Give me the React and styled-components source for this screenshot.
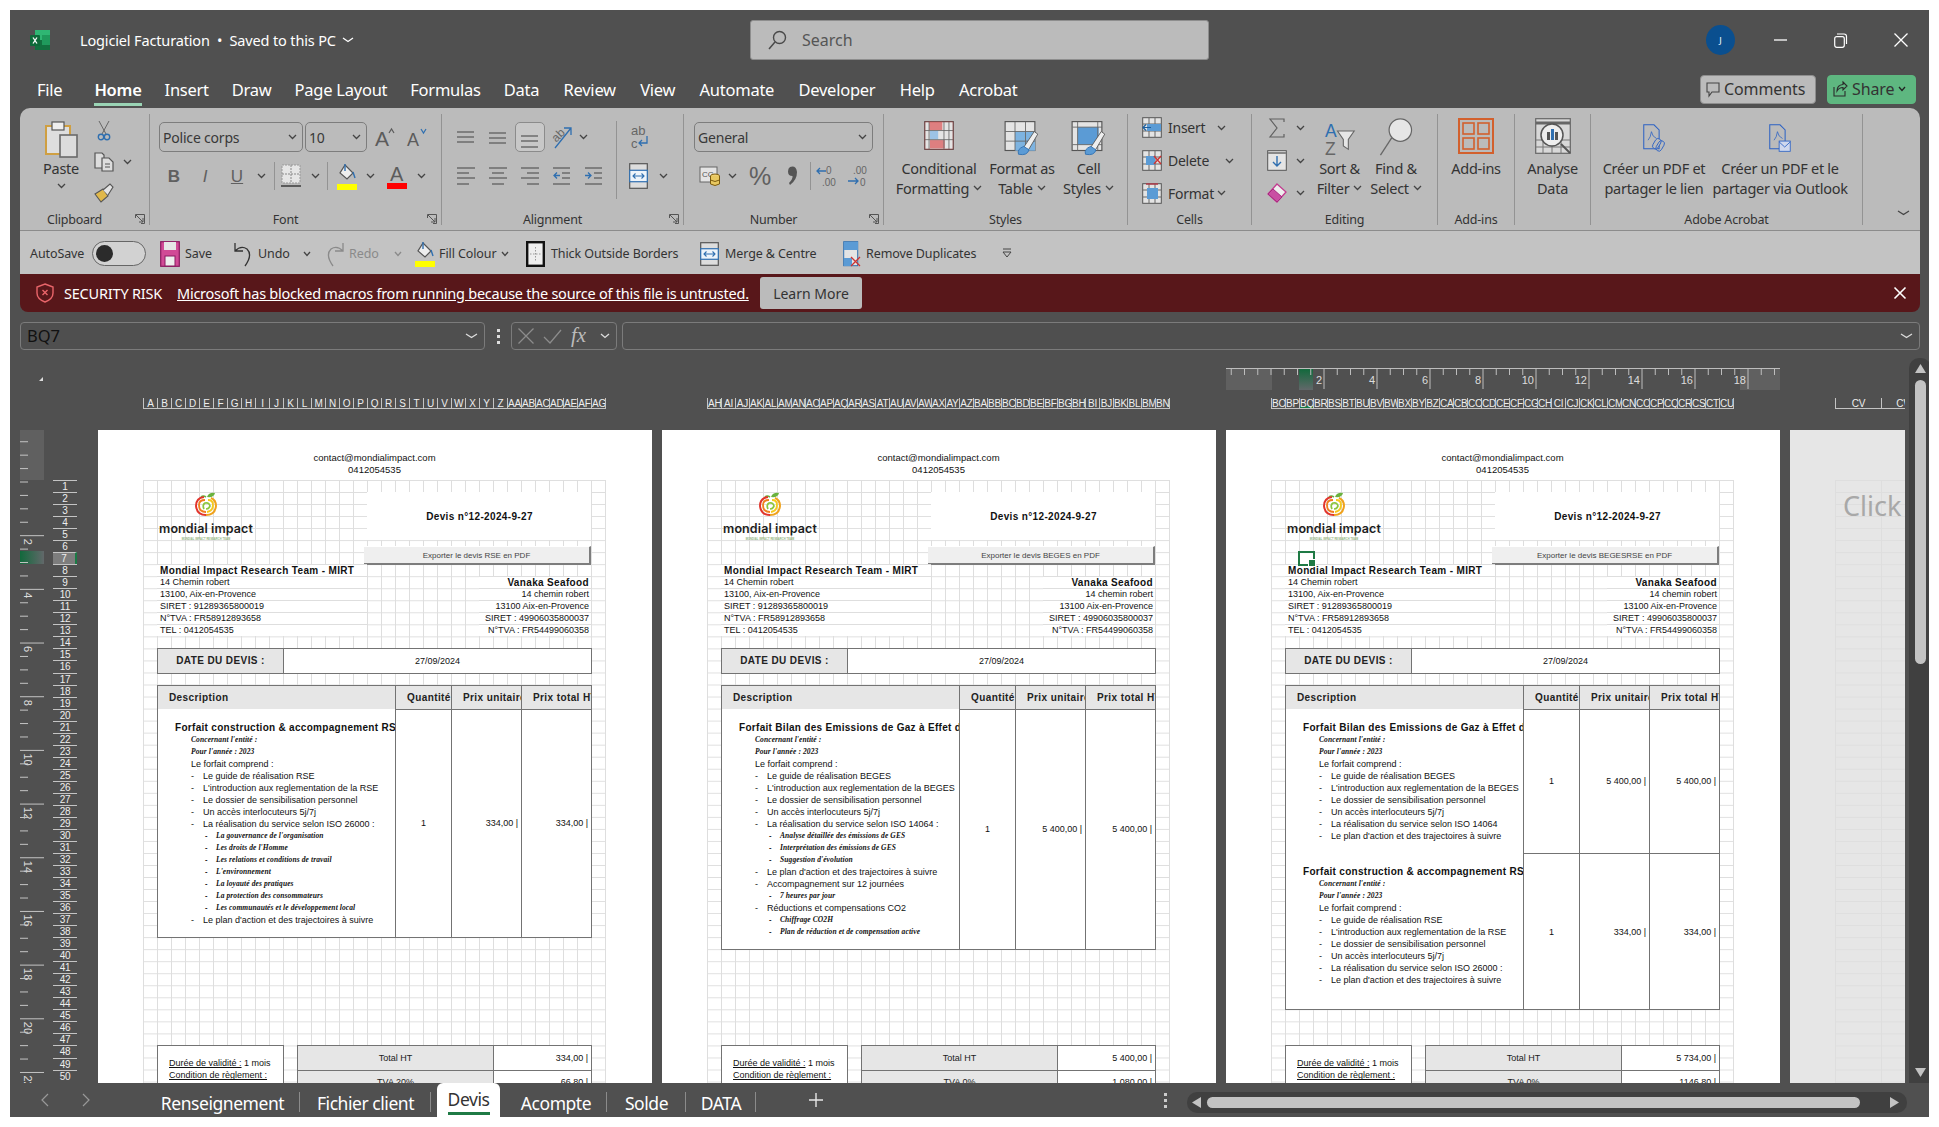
import React from 'react';
import styled, { createGlobalStyle } from 'styled-components';

const UI = '"Noto Sans", "Open Sans", sans-serif';
const SHEET = '"Liberation Sans", Arial, sans-serif';

const Global = createGlobalStyle`
  html, body { margin: 0; background: #fff; }
  * { box-sizing: border-box; }
`;

const Window = styled.div`
  margin: 10px;
  width: 1919px;
  height: 1107px;
  background: #505050;
  display: flex;
  flex-direction: column;
  overflow: hidden;
  font-family: ${UI};
  color: #fff;
`;

/* title bar */
const TitleBar = styled.div`
  height: 60px;
  display: flex;
  align-items: center;
  padding-left: 20px;
  flex-shrink: 0;
`;
const DocTitle = styled.div`
  margin-left: 30px;
  width: 670px;
  font-size: 14.5px;
  letter-spacing: -0.15px;
  display: flex;
  align-items: center;
  gap: 6px;
`;
const SearchBox = styled.div`
  width: 459px;
  height: 40px;
  background: #bbb;
  border: 1px solid #8e8e8e;
  border-radius: 3px;
  display: flex;
  align-items: center;
  gap: 15px;
  padding-left: 17px;
  color: #555;
  font-size: 16px;
`;
const Avatar = styled.div`
  margin-left: 497px;
  width: 29px;
  height: 30px;
  border-radius: 50%;
  background: #0a4f8f;
  font-size: 9px;
  display: flex;
  align-items: center;
  justify-content: center;
`;
const WinBtns = styled.div`
  display: flex;
  align-items: center;
  margin-left: 39px;
  gap: 47px;
`;

/* tab row */
const TabRow = styled.div`
  height: 38px;
  display: flex;
  align-items: center;
  padding-left: 27px;
  flex-shrink: 0;
`;
const Tab = styled.div`
  font-size: 16.5px;
  letter-spacing: -0.25px;
  margin-right: ${(p) => p.$mr || 23}px;
  line-height: 40px;
  font-weight: ${(p) => (p.$active ? 600 : 400)};
  border-bottom: ${(p) => (p.$active ? '3px solid #9ad4b5' : 'none')};
  margin-top: ${(p) => (p.$active ? '-3px' : '0')};
  height: ${(p) => (p.$active ? '36px' : '38px')};
`;
const TabRight = styled.div`
  margin-left: auto;
  display: flex;
  gap: 11px;
  padding-right: 13px;
  align-items: center;
`;
const CommentsBtn = styled.div`
  width: 116px;
  height: 29px;
  background: #bbb;
  border: 1px solid #8e8e8e;
  border-radius: 4px;
  color: #333;
  font-size: 16px;
  letter-spacing: -0.1px;
  display: flex;
  align-items: center;
  gap: 4px;
  padding-left: 5px;
`;
const ShareBtn = styled(CommentsBtn)`
  width: 89px;
  background: #5eb780;
  border-color: #5eb780;
`;

/* ribbon */
const RibbonCard = styled.div`
  margin: 0 9px 0 10px;
  height: 166px;
  border-radius: 10px 10px 0 0;
  background: #bbb;
  color: #2c2c2c;
  flex-shrink: 0;
`;
const RibbonBody = styled.div`
  height: 123px;
  padding-top: 6px;
  display: flex;
  border-bottom: 1px solid #8c8c8c;
`;
const Group = styled.div`
  position: relative;
  width: ${(p) => p.$w}px;
  height: 111px;
  border-right: ${(p) => (p.$noSep ? 'none' : '1px solid #939393')};
  display: flex;
  flex-direction: column;
  flex-shrink: 0;
`;
const GroupBody = styled.div`
  height: 95px;
  display: flex;
  flex-shrink: 0;
  padding-left: ${(p) => p.$pl || 0}px;
`;
const GroupLabel = styled.div`
  height: 22px;
  flex-shrink: 0;
  line-height: 22px;
  font-size: 12.5px;
  letter-spacing: -0.2px;
  color: #333;
  text-align: center;
  padding-right: ${(p) => (p.$launcher ? 20 : 0)}px;
`;
const Launcher = styled.div`
  position: absolute;
  right: 4px;
  bottom: 1px;
  line-height: 0;
`;
const Stack = styled.div`
  width: ${(p) => (p.$w ? `${p.$w}px` : 'auto')};
  display: flex;
  flex-direction: column;
  padding-top: ${(p) => (p.$pt === undefined ? 8 : p.$pt)}px;
  gap: ${(p) => p.$gap || 0}px;
  flex-shrink: 0;
`;
const Row = styled.div`
  height: ${(p) => p.$h || 30}px;
  display: flex;
  align-items: center;
  margin-top: ${(p) => p.$mt || 0}px;
`;
const Slot = styled.div`
  width: ${(p) => p.$w}px;
  margin-left: ${(p) => p.$ml || 0}px;
  display: flex;
  justify-content: center;
  align-items: center;
  flex-shrink: 0;
  line-height: 0;
`;
const SelectedSlot = styled(Slot)`
  height: 30px;
  border: 1px solid #8b8b8b;
  border-radius: 5px;
  background: #c8c8c8;
  align-items: flex-end;
  padding-bottom: 3px;
`;
const VSep = styled.div`
  width: 1px;
  align-self: ${(p) => (p.$tall ? 'flex-start' : 'center')};
  height: ${(p) => p.$h || 30}px;
  margin-top: ${(p) => p.$mt || 0}px;
  margin-left: ${(p) => p.$ml || 0}px;
  background: #939393;
  flex-shrink: 0;
`;
const Combo = styled.div`
  width: ${(p) => p.$w}px;
  height: 30px;
  margin-right: 2px;
  border: 1px solid #7d7d7d;
  border-radius: 5px;
  padding: 0 5px 0 3px;
  font-size: 14px;
  letter-spacing: -0.2px;
  color: #383838;
  display: flex;
  align-items: center;
  justify-content: space-between;
  flex-shrink: 0;
`;
const Glyph = styled.span`
  font-family: ${SHEET};
  font-size: ${(p) => p.$size || 16}px;
  line-height: 1;
  font-weight: ${(p) => (p.$bold ? 700 : 400)};
  font-style: ${(p) => (p.$italic ? 'italic' : 'normal')};
  text-decoration: ${(p) => (p.$under ? 'underline' : 'none')};
  color: #606060;
`;
const BigBtn = styled.div`
  width: ${(p) => p.$w}px;
  margin-left: ${(p) => p.$ml || 0}px;
  display: flex;
  flex-direction: column;
  align-items: center;
  flex-shrink: 0;
`;
const BigIcon = styled.div`
  height: 44px;
  line-height: 0;
  display: flex;
  align-items: flex-end;
  padding-bottom: ${(p) => (p.$pb === undefined ? 2 : p.$pb)}px;
`;
const BigText = styled.div`
  font-size: 14.5px;
  letter-spacing: -0.28px;
  line-height: 20px;
  white-space: nowrap;
  text-align: center;
  color: #333;
  display: flex;
  align-items: center;
  gap: 4px;
  justify-content: center;
`;
const SmallLabel = styled.span`
  font-size: 14px;
  letter-spacing: -0.25px;
  color: #333;
  width: ${(p) => p.$w}px;
  margin-left: 6px;
`;
const CollapseSlot = styled.div`
  flex: 1;
  display: flex;
  justify-content: flex-end;
  align-items: flex-end;
  padding: 0 10px 14px 0;
  line-height: 0;
`;

/* quick access */
const Qat = styled.div`
  height: 43px;
  background: #c3c3c3;
  display: flex;
  align-items: center;
  font-size: 12.5px;
  letter-spacing: -0.1px;
  color: #333;
  padding: 2px 0 0 10px;
`;
const QatText = styled.span`
  margin-left: ${(p) => p.$ml ?? 5}px;
  width: ${(p) => p.$w}px;
  flex-shrink: 0;
  white-space: nowrap;
  color: ${(p) => (p.$off ? '#8a8a8a' : '#333')};
`;
const Toggle = styled.div`
  margin-left: 8px;
  width: 54px;
  height: 25px;
  border: 1px solid #666;
  border-radius: 13px;
  background: #d2d2d2;
  padding: 3px 0 0 3px;
  flex-shrink: 0;
`;
const ToggleKnob = styled.div`
  width: 17px;
  height: 17px;
  border-radius: 50%;
  background: #2b2b2b;
`;

/* security banner */
const SecurityBar = styled.div`
  margin: 0 9px 0 10px;
  height: 38px;
  background: #58171a;
  border-radius: 0 0 8px 8px;
  display: flex;
  align-items: center;
  padding-left: 16px;
  font-size: 14.5px;
  flex-shrink: 0;
`;
const RiskTitle = styled.span`
  margin-left: 10px;
  width: 113px;
  letter-spacing: -0.2px;
  white-space: nowrap;
  flex-shrink: 0;
`;
const RiskLink = styled.span`
  width: 583px;
  text-decoration: underline;
  white-space: nowrap;
  letter-spacing: -0.25px;
  flex-shrink: 0;
`;
const LearnMore = styled.div`
  width: 102px;
  height: 32px;
  background: #bbb;
  border-radius: 3px;
  color: #333;
  font-size: 14px;
  display: flex;
  align-items: center;
  justify-content: center;
  flex-shrink: 0;
`;
const BannerClose = styled.div`
  margin-left: auto;
  padding-right: 14px;
  line-height: 0;
`;

/* formula bar */
const FormulaBar = styled.div`
  margin-top: 10px;
  padding: 0 9px 0 10px;
  height: 28px;
  display: flex;
  align-items: stretch;
  flex-shrink: 0;
`;
const FieldBox = styled.div`
  width: ${(p) => (p.$w ? `${p.$w}px` : 'auto')};
  flex: ${(p) => (p.$w ? '0 0 auto' : 1)};
  margin-left: ${(p) => p.$ml || 0}px;
  border: 1px solid #7b7b7b;
  border-radius: 4px;
  background: #4f4f4f;
  display: flex;
  align-items: center;
  justify-content: space-between;
  padding: 0 6px;
  color: #111;
  font-size: 16.5px;
  line-height: 0;
`;
const DotSlot = styled.div`
  width: 26px;
  display: flex;
  align-items: center;
  justify-content: center;
  line-height: 0;
`;

/* workspace */
const Workspace = styled.div`
  margin-top: 5px;
  height: 728px;
  display: flex;
  flex-shrink: 0;
  overflow: hidden;
`;
const LeftRail = styled.div`
  width: 88px;
  padding-left: 10px;
  flex-shrink: 0;
  position: relative;
`;
const CornerMark = styled.div`
  height: 75px;
  padding: 20px 0 0 19px;
  line-height: 0;
`;
const RailBody = styled.div`
  display: flex;
  gap: 9px;
  align-items: flex-start;
  line-height: 0;
`;
const RowHeads = styled.div`
  margin-top: 50px;
  width: 24px;
  display: grid;
  grid-auto-rows: 12.04px;
`;
const RowHead = styled.div`
  border-top: 1px solid #c4c4c4;
  font-family: ${SHEET};
  font-size: 10px;
  letter-spacing: -0.3px;
  line-height: 11px;
  text-align: center;
  color: #eee;
  background: ${(p) => (p.$on ? '#7d7d7d' : 'transparent')};
  border-right: ${(p) => (p.$on ? '2px solid #1a7a45' : 'none')};
`;
const PagesRow = styled.div`
  display: flex;
  gap: 10px;
  width: 1809px;
  flex-shrink: 0;
`;
const PageCol = styled.div`
  width: ${(p) => p.$w || 554}px;
  flex-shrink: 0;
`;
const PageHead = styled.div`
  height: 75px;
  padding-top: 13px;
  line-height: 0;
`;
const HeadLetters = styled.div`
  margin: ${(p) => (p.$withRuler ? 8 : 30)}px 0 0 ${(p) => p.$ml || 45}px;
  height: 11px;
  display: grid;
  grid-template-columns: repeat(${(p) => p.$n}, ${(p) => p.$cw}px);
  border-bottom: 1px solid #c4c4c4;
  border-right: ${(p) => (p.$open ? 'none' : '1px solid #c4c4c4')};
  width: ${(p) => (p.$open ? '70px' : 'fit-content')};
  overflow: hidden;
`;
const HeadLetter = styled.div`
  border-left: 1px solid #c4c4c4;
  font-family: ${SHEET};
  font-size: 10px;
  letter-spacing: -0.2px;
  line-height: 11px;
  text-align: center;
  color: #eee;
  overflow: hidden;
  white-space: nowrap;
  box-shadow: ${(p) => (p.$on ? 'inset 0 -2px 0 #1a7a45' : 'none')};
`;
const PageSheet = styled.div`
  height: 653px;
  background: #fff;
  color: #111;
  font-family: ${SHEET};
  padding: 22px 0 0 45px;
  overflow: hidden;
`;
const Contact = styled.div`
  width: 463px;
  height: 28px;
  text-align: center;
  font-size: 9.5px;
  line-height: 11.5px;
`;
const Sheet = styled.div`
  width: 463px;
  display: grid;
  grid-template-columns: repeat(33, 14px);
  grid-template-rows: repeat(52, 12.04px);
  background-color: #fff;
  background-image: linear-gradient(#dedede 1px, transparent 1px),
    linear-gradient(90deg, #dedede 1px, transparent 1px);
  background-size: 14px 12.04px;
  border-right: 1px solid #dedede;
`;
const Cell = styled.div`
  grid-column: ${(p) => p.$c + 1} / span ${(p) => p.$cs};
  grid-row: ${(p) => p.$r} / span ${(p) => p.$rs || 1};
  overflow: hidden;
  min-width: 0;
  min-height: 0;
`;
const MergedText = styled(Cell)`
  background: #fff;
  border-top: 1px solid #dedede;
  font-size: ${(p) => (p.$bold ? 10 : 9)}px;
  font-weight: ${(p) => (p.$bold ? 700 : 400)};
  letter-spacing: ${(p) => (p.$bold ? '0.35px' : 0)};
  line-height: 11px;
  white-space: nowrap;
  text-align: ${(p) => (p.$right ? 'right' : 'left')};
  padding: ${(p) => (p.$right ? '0 2px 0 0' : '0 0 0 3px')};
`;
const Bordered = styled(Cell)`
  margin: 0 -1px -1px 0;
  border: 1px solid #737373;
  background: ${(p) => (p.$shade ? '#e6e6e6' : '#fff')};
  display: flex;
  align-items: center;
  justify-content: ${(p) => p.$justify || 'flex-start'};
  padding: ${(p) => p.$pad || '0'};
  font-size: ${(p) => (p.$bold ? 10 : 9)}px;
  font-weight: ${(p) => (p.$bold ? 700 : 400)};
  letter-spacing: ${(p) => (p.$bold ? '0.4px' : 0)};
  white-space: nowrap;
  color: ${(p) => (p.$shade ? '#222' : '#111')};
`;
const DescCell = styled(Cell)`
  margin: 0 -1px -1px 0;
  border: 1px solid #737373;
  border-top: none;
  background: #fff;
  padding: 13px 0 0 17px;
  line-height: 12.04px;
  white-space: nowrap;
  font-size: 9px;
`;
const DescTitle = styled.div`
  height: 12.04px;
  font-size: 10px;
  font-weight: 700;
  letter-spacing: 0.3px;
`;
const DescLine = styled.div`
  height: 12.04px;
  display: flex;
  padding-left: 16px;
`;
const DescNote = styled(DescLine)`
  padding-left: ${(p) => (p.$sub ? 30 : 16)}px;
  font-family: "Liberation Serif", serif;
  font-size: 7.5px;
  font-weight: 700;
  font-style: italic;
  letter-spacing: 0.1px;
`;
const Dash = styled.span`
  width: ${(p) => (p.$sub ? 11 : 12)}px;
  flex-shrink: 0;
  font-style: normal;
  font-family: ${SHEET};
`;
const ExportBtn = styled(Cell)`
  margin: 6px 0 -1px -3px;
  background: #efefef;
  border-right: 2px solid #7d7d7d;
  border-bottom: 2px solid #7d7d7d;
  border-top: 1px solid #fff;
  font-size: 8px;
  color: #444;
  display: flex;
  align-items: center;
  justify-content: center;
`;
const TitleBox = styled(Cell)`
  background: #fff;
  font-size: 10px;
  font-weight: 700;
  letter-spacing: 0.35px;
  display: flex;
  align-items: center;
  justify-content: center;
  padding-left: 1px;
`;
const LogoBox = styled(Cell)`
  display: flex;
  flex-direction: column;
  align-items: center;
  overflow: visible;
  line-height: 0;
`;
const LogoName = styled.div`
  font-family: "Inter", sans-serif;
  font-size: 12.5px;
  font-weight: 600;
  line-height: 14px;
  margin-top: 5px;
  white-space: nowrap;
  letter-spacing: 0.1px;
  color: #1c1c1c;
`;
const LogoTag = styled.div`
  font-family: ${SHEET};
  font-size: 2.6px;
  line-height: 4px;
  margin-top: 2px;
  font-weight: 700;
  letter-spacing: 0.1px;
  color: #8fb37a;
  white-space: nowrap;
`;
const TermsBox = styled(Bordered)`
  border-bottom: none;
  display: block;
  padding: 11px 0 0 11px;
  line-height: 12px;
`;
const Under = styled.span`
  text-decoration: underline;
`;
const SelectedCell = styled(Cell)`
  margin: -1px -2px -2px -1px;
  border: 2px solid #1f7a45;
  overflow: visible;
  position: relative;
  &::after {
    content: '';
    position: absolute;
    right: -3px;
    bottom: -3px;
    width: 6px;
    height: 6px;
    background: #1f7a45;
    border: 1px solid #fff;
  }
`;
const NextPage = styled.div`
  height: 653px;
  background: #e6e6e6;
  padding: 50px 0 0 45px;
`;
const FaintGrid = styled.div`
  height: 100%;
  background-image: linear-gradient(#dedede 1px, transparent 1px),
    linear-gradient(90deg, #dedede 1px, transparent 1px);
  background-size: 46px 12.04px;
  padding: 10px 0 0 8px;
  font-size: 27px;
  line-height: 32px;
  color: #a8a8a8;
  white-space: nowrap;
  overflow: hidden;
`;
const VScroll = styled.div`
  margin: 3px 0 0 2px;
  width: 22px;
  border-radius: 10px 10px 0 0;
  background: #404040;
  display: flex;
  flex-direction: column;
  align-items: center;
  padding-top: 6px;
  line-height: 0;
  flex-shrink: 0;
`;
const VThumb = styled.div`
  margin-top: 7px;
  width: 11px;
  height: 284px;
  border-radius: 6px;
  background: #c3c3c3;
`;
const VDown = styled.div`
  margin-top: 404px;
`;

/* bottom bar */
const BottomBar = styled.div`
  flex: 1;
  background: #505050;
  display: flex;
  align-items: stretch;
  padding-left: 25px;
`;
const NavArrow = styled.div`
  width: 20px;
  margin-right: ${(p) => p.$mr || 0}px;
  display: flex;
  align-items: center;
  justify-content: center;
  line-height: 0;
`;
const SheetTab = styled.div`
  width: ${(p) => p.$w}px;
  font-size: 17.5px;
  letter-spacing: -0.45px;
  display: flex;
  align-items: center;
  justify-content: center;
  position: relative;
  padding-top: 6px;
  white-space: nowrap;
  &::after {
    content: '';
    position: absolute;
    right: 0;
    top: 9px;
    height: 20px;
    width: 1px;
    background: #8b8b8b;
  }
`;
const ActiveTab = styled.div`
  width: 63px;
  margin: 0 5px 0 6px;
  background: #fff;
  border-radius: 6px 6px 0 0;
  color: #333;
  font-size: 17.5px;
  letter-spacing: -0.45px;
  display: flex;
  flex-direction: column;
  align-items: center;
  padding-top: 4px;
`;
const ActiveLine = styled.div`
  width: 42px;
  height: 2.5px;
  margin-top: 1px;
  background: #1f7a45;
`;
const PlusSlot = styled.div`
  margin-left: 50px;
  width: 20px;
  display: flex;
  align-items: center;
  justify-content: center;
  line-height: 0;
`;
const HDots = styled.div`
  margin-left: 329px;
  width: 20px;
  display: flex;
  align-items: center;
  justify-content: center;
  line-height: 0;
`;
const HScroll = styled.div`
  margin: 9px 0 4px 12px;
  width: 720px;
  height: 21px;
  border-radius: 10px;
  background: #404040;
  display: flex;
  align-items: center;
  padding-left: 5px;
  line-height: 0;
`;
const HThumb = styled.div`
  margin-left: 6px;
  width: 653px;
  height: 11px;
  border-radius: 6px;
  background: #c3c3c3;
`;
const HRight = styled.div`
  margin-left: 30px;
`;

/* drawings */
const Svg = ({ w, h, vw, vh, children }) => (
  <svg width={w} height={h} viewBox={`0 0 ${vw || w} ${vh || h}`} fill="none" overflow="visible">{children}</svg>
);
const Chev = ({ c = '#444', w = 9 }) => (
  <Svg w={w} h={6}><path d={`M1 1 L${w / 2} 4.5 L${w - 1} 1`} stroke={c} strokeWidth="1.3" /></Svg>
);
const Lines = ({ ys, x1 = 0, x2 = 17, c = '#666' }) => (
  <>{ys.map((y, i) => <path key={i} d={`M${Array.isArray(x1) ? x1[i] : x1} ${y}H${Array.isArray(x2) ? x2[i] : x2}`} stroke={c} strokeWidth="1.4" />)}</>
);
const ExcelLogo = () => (
  <Svg w={20} h={20}>
    <rect x="5" y="0" width="15" height="10" fill="#2fb673" />
    <rect x="5" y="10" width="15" height="10" fill="#12703f" />
    <rect x="12" y="5" width="8" height="10" fill="#1f9a5c" />
    <rect x="0" y="5" width="10" height="11" rx="1" fill="#0e6a39" />
    <path d="M3 7.5 L7 13.5 M7 7.5 L3 13.5" stroke="#fff" strokeWidth="1.3" />
  </Svg>
);
const SearchIco = () => (
  <Svg w={19} h={20}><circle cx="11.5" cy="7.5" r="6" stroke="#4a4a4a" strokeWidth="1.4" /><path d="M7 12 L1 19" stroke="#4a4a4a" strokeWidth="1.5" /></Svg>
);
const PasteIco = () => (
  <Svg w={35} h={38}>
    <rect x="2" y="6" width="24" height="28" fill="#dedede" stroke="#cf9f42" strokeWidth="2" />
    <rect x="8" y="2" width="12" height="8" fill="#eee" stroke="#555" strokeWidth="1.2" />
    <rect x="16" y="15" width="17" height="22" fill="#dcdcdc" stroke="#6a6a6a" strokeWidth="1.6" />
  </Svg>
);
const CutIco = () => (
  <Svg w={14} h={21}>
    <path d="M2 1 L9 14 M12 1 L5 14" stroke="#666" strokeWidth="1" />
    <circle cx="4" cy="17" r="2.7" stroke="#2f6fb0" strokeWidth="1.4" />
    <circle cx="10" cy="17" r="2.7" stroke="#2f6fb0" strokeWidth="1.4" />
  </Svg>
);
const CopyIco = () => (
  <Svg w={20} h={20}>
    <path d="M1 1 H8 L10 3 V16 H1 Z" fill="#ddd" stroke="#555" strokeWidth="1.2" />
    <path d="M8 6 H15 L19 10 V19 H8 Z" fill="#ddd" stroke="#555" strokeWidth="1.2" />
    <path d="M11 12 H16 M11 15 H16" stroke="#555" />
  </Svg>
);
const PainterIco = () => (
  <Svg w={20} h={20}>
    <path d="M1 11 L9 6 L14 13 L7 19 Z" fill="#e0b84a" stroke="#555" strokeWidth="1.1" />
    <path d="M9 7 L16 1 L19 4 L14 12" fill="#e4e4e4" stroke="#555" strokeWidth="1.1" />
  </Svg>
);
const FontGrow = ({ up }) => (
  <Svg w={20} h={22}>
    <text x="0" y="20" fontFamily={SHEET} fontSize={up ? 21 : 18} fill="#5c5c5c">A</text>
    <path d={up ? 'M14 7 L16.5 3 L19 7' : 'M14 3 L16.5 7 L19 3'} stroke={up ? '#5c5c5c' : '#2f6fb0'} strokeWidth="1.2" />
  </Svg>
);
const BordersIco = () => (
  <Svg w={20} h={24}>
    <rect x="1" y="1" width="18" height="18" fill="#e6e6e6" stroke="#999" strokeDasharray="2 1" />
    <path d="M10 1 V19 M1 10 H19" stroke="#888" strokeDasharray="2 1" />
    <path d="M0 22 H20" stroke="#444" strokeWidth="1.6" />
  </Svg>
);
const FillIco = ({ h = 24 }) => (
  <Svg w={20} h={h}>
    <path d="M8 2 L16 10 L10 16 L3 10 Z" fill="#eee" stroke="#555" strokeWidth="1.2" />
    <path d="M8 1 V8 M16 9 L18 15" stroke="#2f6fb0" strokeWidth="1.4" />
    <rect x="0" y={h - 6} width="20" height="6" fill="#ffff00" />
  </Svg>
);
const ColorA = () => (
  <Svg w={20} h={25}>
    <text x="3" y="17" fontFamily={SHEET} fontSize="20" fill="#5c5c5c">A</text>
    <rect x="0" y="19" width="20" height="6" fill="#ff0000" />
  </Svg>
);
const OrientIco = () => (
  <Svg w={22} h={24}>
    <text x="0" y="15" fontFamily={SHEET} fontSize="12" fill="#666" transform="rotate(-45 6 10)">ab</text>
    <path d="M4 23 L20 3 M13 3 H20 V10" stroke="#2f6fb0" strokeWidth="1.3" />
  </Svg>
);
const WrapIco = () => (
  <Svg w={18} h={27}>
    <text x="0" y="11" fontFamily={SHEET} fontSize="13" fill="#666">ab</text>
    <text x="0" y="24" fontFamily={SHEET} fontSize="13" fill="#666">c</text>
    <path d="M16 12 V19 H8 M11 16 L8 19 L11 22" stroke="#2f6fb0" strokeWidth="1.3" />
  </Svg>
);
const IndentIco = ({ dir }) => (
  <Svg w={18} h={18}>
    <Lines ys={[1, 17]} />
    <Lines ys={[6, 11]} x1={9} />
    <path d={dir < 0 ? 'M7 8.5 H1 M4 5.5 L1 8.5 L4 11.5' : 'M0 8.5 H6 M3 5.5 L6 8.5 L3 11.5'} stroke="#2f6fb0" strokeWidth="1.3" />
  </Svg>
);
const MergeIco = ({ s = 19, h = 26 }) => (
  <Svg w={s} h={h}>
    <rect x="0.7" y="0.7" width={s - 1.4} height={h - 1.4} fill="#ddd" stroke="#555" strokeWidth="1.2" />
    <rect x="0.7" y={h * 0.28} width={s - 1.4} height={h * 0.44} fill="#eef4fa" stroke="#2f6fb0" strokeWidth="1.2" />
    <path d={`M4 ${h / 2} H${s - 4} M6.5 ${h / 2 - 2.5} L4 ${h / 2} L6.5 ${h / 2 + 2.5} M${s - 6.5} ${h / 2 - 2.5} L${s - 4} ${h / 2} L${s - 6.5} ${h / 2 + 2.5}`} stroke="#2f6fb0" strokeWidth="1.1" />
  </Svg>
);
const AccountingIco = () => (
  <Svg w={22} h={22}>
    <rect x="1" y="2" width="17" height="15" fill="#e4e4e4" stroke="#666" />
    <text x="3" y="12" fontFamily={SHEET} fontSize="8" fill="#555">CC</text>
    <ellipse cx="16" cy="11" rx="4.5" ry="2" fill="#f0d070" stroke="#7a5a10" />
    <path d="M11.5 11 V19 Q16 22 20.5 19 V11" fill="#e8c860" stroke="#7a5a10" />
    <path d="M11.5 15 Q16 18 20.5 15" stroke="#7a5a10" />
  </Svg>
);
const CommaIco = () => (
  <Svg w={11} h={20}><path d="M3 1 Q9 -1 10 6 Q10 14 3 19 L2 17 Q6 13 5.5 10 Q1 10 1 5.5 Q1 2 3 1 Z" fill="#555" /></Svg>
);
const DecimalIco = ({ more }) => (
  <Svg w={20} h={24}>
    <text x={more ? 5 : 9} y="10" fontFamily={SHEET} fontSize="10" fill="#666">{more ? '.00' : '0'}</text>
    <text x={more ? 12 : 5} y="22" fontFamily={SHEET} fontSize="10" fill="#666">{more ? '0' : '.00'}</text>
    <path d={more ? 'M0 17 H10 M7 14 L10 17 L7 20' : 'M0 7 H9 M3 4 L0 7 L3 10'} stroke="#2f6fb0" strokeWidth="1.3" />
  </Svg>
);
const CondFmtIco = () => (
  <Svg w={36} h={29} vw={36} vh={35}>
    <rect x="0.7" y="0.7" width="34.6" height="33.6" fill="#e4e4e4" stroke="#555" strokeWidth="1.3" />
    <rect x="6" y="1" width="16" height="10" fill="#de7f80" />
    <rect x="7" y="23" width="18" height="10" fill="#de7f80" />
    <rect x="7" y="12" width="10" height="10" fill="#9cc3e5" />
    <path d="M1 11.5 H35 M1 22.5 H35 M6 1 V34 M24 1 V34 M30 1 V34" stroke="#666" />
    <path d="M1 1 H35 V34 H1 Z" stroke="#a33" strokeWidth="0.6" />
  </Svg>
);
const Brush = () => (
  <>
    <path d="M22 30 L34 12 L38 15 L28 32" fill="#eee" stroke="#555" />
    <path d="M16 38 Q14 32 22 29 L28 33 Q26 40 16 38 Z" fill="#5b9bd5" stroke="#2f6fb0" />
  </>
);
const TableFmtIco = () => (
  <Svg w={38} h={35} vw={40} vh={40}>
    <rect x="0.7" y="0.7" width="34" height="33" fill="#e4e4e4" stroke="#555" strokeWidth="1.3" />
    <rect x="12" y="12" width="23" height="22" fill="#7db3e0" />
    <path d="M1 12 H35 M1 23 H35 M12 1 V34 M24 1 V34" stroke="#666" />
    <Brush />
  </Svg>
);
const CellStyleIco = () => (
  <Svg w={38} h={35} vw={40} vh={40}>
    <rect x="0.7" y="0.7" width="34" height="33" fill="#e4e4e4" stroke="#555" strokeWidth="1.3" />
    <rect x="7" y="7" width="24" height="20" fill="#5b9bd5" />
    <path d="M1 7 H35 M1 27 H35 M7 1 V34 M30 1 V34" stroke="#666" />
    <Brush />
  </Svg>
);
const CellOpIco = ({ kind }) => (
  <Svg w={20} h={21}>
    <rect x="0.7" y="0.7" width="18.6" height="19.6" fill="#e4e4e4" stroke="#555" />
    <path d="M7 1 V20 M13 1 V20 M1 7 H19 M1 14 H19" stroke="#666" />
    {kind === 'insert' && <><rect x="5" y="7" width="14" height="7" fill="#5b9bd5" /><path d="M1 10.5 H9 M4 7.5 L1 10.5 L4 13.5" stroke="#1d5f9e" strokeWidth="1.2" /></>}
    {kind === 'delete' && <><rect x="4" y="6" width="9" height="9" fill="#5b9bd5" /><path d="M12 6 L19 14 M19 6 L12 14" stroke="#c33" strokeWidth="1.4" /></>}
    {kind === 'format' && <><rect x="5" y="5" width="11" height="11" fill="#5b9bd5" /><path d="M4 1 H16" stroke="#b23a48" strokeWidth="1.5" /></>}
  </Svg>
);
const SigmaIco = () => (
  <Svg w={16} h={20}><path d="M15 4 V1 H1 L8 10 L1 19 H15 V16" stroke="#606060" strokeWidth="1.2" /></Svg>
);
const FillDownIco = () => (
  <Svg w={20} h={21}>
    <rect x="0.7" y="0.7" width="18.6" height="19.6" fill="#e4e4e4" stroke="#555" />
    <path d="M1 3 H19" stroke="#888" strokeWidth="2" />
    <path d="M10 6 V16 M6 12 L10 16 L14 12" stroke="#2f6fb0" strokeWidth="1.4" />
  </Svg>
);
const EraserIco = () => (
  <Svg w={20} h={20}>
    <path d="M10 1 L19 9 L10 19 L1 11 Z" fill="#eee" stroke="#c33b8f" strokeWidth="1.3" />
    <path d="M1 11 L6 6 L15 14 L10 19 Z" fill="#c94fa3" stroke="#a82a80" />
  </Svg>
);
const SortIco = () => (
  <Svg w={36} h={35} vw={36} vh={42}>
    <text x="0" y="19" fontFamily={SHEET} fontSize="21" fill="#2f6fb0">A</text>
    <text x="0" y="41" fontFamily={SHEET} fontSize="21" fill="#666">Z</text>
    <path d="M15 12 H35 L28 22 V34 L22 30 V22 Z" fill="#e6e6e6" stroke="#666" strokeWidth="1.3" />
  </Svg>
);
const FindIco = () => (
  <Svg w={36} h={38} vw={38} vh={44}>
    <circle cx="24" cy="14" r="13" fill="#e6e6e6" stroke="#666" strokeWidth="1.4" />
    <path d="M14 23 L1 43" stroke="#666" strokeWidth="1.5" />
  </Svg>
);
const AddInsIco = () => (
  <Svg w={36} h={36}>
    <rect x="1" y="1" width="34" height="34" stroke="#d2602d" strokeWidth="2" />
    <rect x="5" y="5" width="11" height="11" stroke="#d2602d" strokeWidth="1.6" />
    <rect x="20" y="5" width="11" height="11" stroke="#d2602d" strokeWidth="1.6" />
    <rect x="5" y="20" width="11" height="11" stroke="#d2602d" strokeWidth="1.6" />
    <rect x="20" y="20" width="11" height="11" stroke="#d2602d" strokeWidth="1.6" />
  </Svg>
);
const AnalyseIco = () => (
  <Svg w={36} h={36}>
    <rect x="0.7" y="0.7" width="34.6" height="34.6" fill="#d8d8d8" stroke="#666" strokeWidth="1.2" />
    <path d="M1 5 H35" stroke="#666" strokeWidth="3" />
    <path d="M1 22 H35 M1 29 H35 M8 24 V35 M17 24 V35 M26 24 V35" stroke="#777" />
    <circle cx="17" cy="17" r="11" fill="#eee" stroke="#555" strokeWidth="1.5" />
    <path d="M26 26 L35 35" stroke="#555" strokeWidth="2" />
    <rect x="12" y="14" width="3" height="8" fill="#555" />
    <rect x="16" y="11" width="3" height="11" fill="#2f6fb0" />
    <rect x="20" y="14" width="3" height="8" fill="#555" />
  </Svg>
);
const PdfDoc = () => (
  <>
    <path d="M1 1 H13 L19 7 V29 H1 Z" stroke="#2c62c4" strokeWidth="1.2" />
    <path d="M6 19 Q9 16 10 9 Q11 15 16 17" stroke="#2c62c4" strokeWidth="0.9" />
  </>
);
const PdfLinkIco = () => (
  <Svg w={24} h={29} vw={26} vh={34}>
    <PdfDoc />
    <rect x="13" y="17" width="7" height="13" rx="3.5" transform="rotate(30 17 23)" fill="#bbb" stroke="#2c62c4" />
    <rect x="17" y="19" width="7" height="13" rx="3.5" transform="rotate(30 20 25)" stroke="#2c62c4" />
  </Svg>
);
const PdfMailIco = () => (
  <Svg w={24} h={29} vw={26} vh={34}>
    <PdfDoc />
    <rect x="12" y="20" width="13" height="12" fill="#cfd8ee" stroke="#2c62c4" />
    <path d="M12 21 L18.5 27 L25 21" stroke="#2c62c4" />
  </Svg>
);
const LauncherIco = () => (
  <Svg w={10} h={10}>
    <path d="M0.5 4 V0.5 H9.5 V9.5 H6" stroke="#555" />
    <path d="M1 1 L8 8 M8 4 V8 H4" stroke="#555" />
  </Svg>
);
const SaveIco = () => (
  <Svg w={20} h={26}>
    <rect x="0.7" y="0.7" width="18.6" height="24.6" fill="#d14a96" stroke="#8a1a60" strokeWidth="1.2" />
    <rect x="4" y="1" width="12" height="8" fill="#e6e6e6" />
    <rect x="5" y="15" width="10" height="10" fill="#eee" stroke="#8a1a60" />
  </Svg>
);
const UndoIco = ({ c = '#333' }) => (
  <Svg w={20} h={26}>
    <path d="M2 2 V10 H10 M2 10 Q8 4 14 8 Q20 14 12 25" stroke={c} strokeWidth="1.3" />
  </Svg>
);
const RedoIco = () => (
  <Svg w={20} h={26}>
    <path d="M18 2 V10 H10 M18 10 Q12 4 6 8 Q0 14 8 25" stroke="#8a8a8a" strokeWidth="1.3" />
  </Svg>
);
const ThickIco = () => (
  <Svg w={19} h={26}>
    <rect x="1.2" y="1.2" width="16.6" height="23.6" fill="#eee" stroke="#111" strokeWidth="2.4" />
    <path d="M9.5 6 V20 M4 13 H15" stroke="#999" strokeDasharray="1.5 1.5" />
  </Svg>
);
const DedupIco = () => (
  <Svg w={18} h={26}>
    <rect x="0.7" y="0.7" width="14" height="24" fill="#e4e4e4" stroke="#2f6fb0" />
    <rect x="1" y="1" width="14" height="8" fill="#5b9bd5" />
    <rect x="1" y="17" width="8" height="8" fill="#5b9bd5" />
    <path d="M8 16 L17 25 M17 16 L8 25" stroke="#c33" strokeWidth="1.3" />
  </Svg>
);
const MoreIco = () => (
  <Svg w={10} h={11}><path d="M1 1 H9" stroke="#444" /><path d="M1 4 L5 9 L9 4 Z" stroke="#444" /></Svg>
);
const ShieldIco = () => (
  <Svg w={18} h={20}>
    <path d="M9 1 L17 4 V10 Q17 16 9 19 Q1 16 1 10 V4 Z" stroke="#e8656a" strokeWidth="1.4" />
    <path d="M6.5 7 L11.5 12 M11.5 7 L6.5 12" stroke="#e8656a" strokeWidth="1.4" />
  </Svg>
);
const CrossIco = ({ s = 13, c = '#fff', sw = 1.3 }) => (
  <Svg w={s} h={s}><path d={`M0.5 0.5 L${s - 0.5} ${s - 0.5} M${s - 0.5} 0.5 L0.5 ${s - 0.5}`} stroke={c} strokeWidth={sw} /></Svg>
);
const MinIco = () => <Svg w={13} h={2}><path d="M0 1 H13" stroke="#fff" strokeWidth="1.3" /></Svg>;
const RestoreIco = () => (
  <Svg w={13} h={15}>
    <rect x="0.7" y="3.7" width="9.6" height="10.6" rx="2" stroke="#fff" strokeWidth="1.2" />
    <path d="M3 1 H10 Q12.5 1 12.5 3.5 V11" stroke="#fff" strokeWidth="1.2" />
  </Svg>
);
const CommentIco = () => (
  <Svg w={14} h={15}><path d="M1 1 H13 V10 H6 L3 14 V10 H1 Z" stroke="#444" strokeWidth="1.1" /></Svg>
);
const ShareIco = () => (
  <Svg w={15} h={16}>
    <path d="M10 1 L14 5 L10 9 V6.5 Q6 6.5 4 10 Q4 4 10 3.5 Z" stroke="#2b2b2b" strokeWidth="1.1" />
    <path d="M1 6 V15 H12 V10" stroke="#2b2b2b" strokeWidth="1.1" />
  </Svg>
);
const VDots = ({ c = '#ddd' }) => (
  <Svg w={3} h={15}>
    <rect y="0" width="3" height="3" fill={c} /><rect y="6" width="3" height="3" fill={c} /><rect y="12" width="3" height="3" fill={c} />
  </Svg>
);
const Fx = () => (
  <Svg w={20} h={22}>
    <text x="0" y="17" fontFamily='"Liberation Serif", serif' fontStyle="italic" fontSize="21" fill="#bbb">fx</text>
  </Svg>
);
const AppleMark = () => (
  <Svg w={24} h={25}>
    <path d="M13 5 Q15 0 21 1 Q20 6 13 5 Z" fill="#6ab23e" />
    <path d="M7 5 Q9 3 12 5" stroke="#6ab23e" strokeWidth="1.6" />
    <path d="M12 23 Q3 23 2 14 Q2 6 10 5" stroke="#e2352c" strokeWidth="2" />
    <path d="M12 23 Q21 23 22 14 Q22 8 17 6" stroke="#f0a21c" strokeWidth="2" />
    <path d="M12 20 Q5 20 5 13 Q5 8 11 8" stroke="#f07f1e" strokeWidth="1.8" />
    <path d="M13 20 Q19 19 19 13 Q19 8 14 8" stroke="#f6c91c" strokeWidth="1.8" />
    <path d="M10 17 Q8 13 11 11 Q15 10 16 14 Q15 17 12 17" stroke="#8cc63f" strokeWidth="1.7" />
  </Svg>
);
const TopRuler = () => {
  const ticks = [];
  const zero = 45;
  for (let k = -3; k <= 40; k++) {
    const x = zero + k * 13.25;
    if (x < 0 || x > 552) continue;
    ticks.push(<path key={k} d={`M${x} 0 V${k % 4 === 0 && k > 0 && k < 38 ? 21 : 7}`} stroke="#bdbdbd" />);
    if (k % 4 === 0 && k > 0 && k < 38) {
      ticks.push(<text key={`t${k}`} x={x - 2} y="16" textAnchor="end" fontFamily={SHEET} fontSize="11" fill="#ddd">{k / 2}</text>);
    }
  }
  return (
    <Svg w={554} h={22}>
      <rect x="0" y="0" width="46" height="22" fill="#606060" />
      <rect x="514" y="0" width="40" height="22" fill="#606060" />
      <defs><linearGradient id="rg" x1="0" y1="0" x2="0" y2="1"><stop offset="0" stopColor="#12693c" /><stop offset="1" stopColor="#62686a" /></linearGradient></defs>
      <rect x="73" y="1" width="14" height="21" fill="url(#rg)" />
      <path d="M0 0.5 H554" stroke="#bdbdbd" />
      {ticks}
    </Svg>
  );
};
const LeftRuler = () => {
  const ticks = [];
  for (let k = -3; k <= 45; k++) {
    const y = 52 + k * 13.42;
    const long = k % 4 === 0 && k > 0;
    ticks.push(<path key={k} d={`M0 ${y} H${long ? 24 : 8}`} stroke="#c4c4c4" />);
    if (long) {
      ticks.push(
        <text key={`t${k}`} x="0" y="0" transform={`translate(4 ${y + 3}) rotate(90)`} fontFamily={SHEET} fontSize="11" fill="#ddd">{k / 2}</text>
      );
    }
  }
  return (
    <Svg w={24} h={653}>
      <rect x="0" y="0" width="24" height="50" fill="#606060" />
      <defs><linearGradient id="lg" x1="0" y1="0" x2="1" y2="0"><stop offset="0" stopColor="#12693c" /><stop offset="1" stopColor="#62686a" /></linearGradient></defs>
      <rect x="0" y="121" width="24" height="13" fill="url(#lg)" />
      {ticks}
    </Svg>
  );
};
const Tri = ({ dir, c = '#c3c3c3' }) => {
  const d = { up: 'M0 9 L5.5 0 L11 9 Z', down: 'M0 0 L5.5 9 L11 0 Z', left: 'M9 0 L0 5.5 L9 11 Z', right: 'M0 0 L9 5.5 L0 11 Z' }[dir];
  return <Svg w={dir === 'up' || dir === 'down' ? 11 : 9} h={dir === 'up' || dir === 'down' ? 9 : 11}><path d={d} fill={c} /></Svg>;
};

/* data */
const colName = (i) => (i < 26 ? String.fromCharCode(65 + i) : String.fromCharCode(64 + Math.floor(i / 26)) + String.fromCharCode(65 + (i % 26)));

const COMMON = ['Le dossier de sensibilisation personnel', 'Un accès interlocuteurs 5j/7j'];
const HEAD = [['note', "Concernant l'entité :"], ['note', "Pour l'année : 2023"], ['plain', 'Le forfait comprend :']];
const dash = (t) => ['dash', t];
const sub = (t) => ['sub', t];

const RSE_INTRO = [dash('Le guide de réalisation RSE'), dash("L'introduction aux reglementation de la RSE"), ...COMMON.map(dash)];
const BEGES_INTRO = [dash('Le guide de réalisation BEGES'), dash("L'introduction aux reglementation de la BEGES"), ...COMMON.map(dash)];
const PLAN = dash("Le plan d'action et des trajectoires à suivre");
const RSE_TITLE = 'Forfait construction & accompagnement RSE';
const BEGES_TITLE = 'Forfait Bilan des Emissions de Gaz à Effet de Serre';

const PAGES = [
  {
    start: 0,
    button: 'Exporter le devis RSE en PDF',
    rows: [{
      r: 20, rs: 19, title: RSE_TITLE, price: '334,00 |',
      lines: [...HEAD, ...RSE_INTRO, dash('La réalisation du service selon ISO 26000 :'),
        sub("La gouvernance de l'organisation"), sub("Les droits de l'Homme"), sub('Les relations et conditions de travail'),
        sub("L'environnement"), sub('La loyauté des pratiques'), sub('La protection des consommateurs'),
        sub('Les communautés et le développement local'), PLAN],
    }],
    total: '334,00 |', tvaLabel: 'TVA 20%', tva: '66,80 |',
  },
  {
    start: 33,
    button: 'Exporter le devis BEGES en PDF',
    rows: [{
      r: 20, rs: 20, title: BEGES_TITLE, price: '5 400,00 |',
      lines: [...HEAD, ...BEGES_INTRO, dash('La réalisation du service selon ISO 14064 :'),
        sub('Analyse détaillée des émissions de GES'), sub('Interprétation des émissions de GES'), sub("Suggestion d'évolution"),
        PLAN, dash('Accompagnement sur 12 journées'), sub('7 heures par jour'), dash('Réductions et compensations CO2'),
        sub('Chiffrage CO2H'), sub('Plan de réduction et de compensation active')],
    }],
    total: '5 400,00 |', tvaLabel: 'TVA 0%', tva: '1 080,00 |',
  },
  {
    start: 66,
    button: 'Exporter le devis BEGESRSE en PDF',
    active: true,
    rows: [
      { r: 20, rs: 12, title: BEGES_TITLE, price: '5 400,00 |',
        lines: [...HEAD, ...BEGES_INTRO, dash('La réalisation du service selon ISO 14064'), PLAN] },
      { r: 32, rs: 13, title: RSE_TITLE, price: '334,00 |',
        lines: [...HEAD, ...RSE_INTRO, dash('La réalisation du service selon ISO 26000 :'), PLAN] },
    ],
    total: '5 734,00 |', tvaLabel: 'TVA 0%', tva: '1146,80 |',
  },
];

const LEFT_ADDR = ['14 Chemin robert', '13100, Aix-en-Provence', 'SIRET : 91289365800019', 'N°TVA : FR58912893658', 'TEL : 0412054535'];
const RIGHT_ADDR = ['14 chemin robert', '13100 Aix-en-Provence', 'SIRET : 49906035800037', 'N°TVA : FR54499060358'];

const Description = ({ row }) => (
  <DescCell $c={1} $cs={17} $r={row.r} $rs={row.rs}>
    <DescTitle>{row.title}</DescTitle>
    {row.lines.map(([kind, text], i) => {
      if (kind === 'note') return <DescNote key={i}>{text}</DescNote>;
      if (kind === 'plain') return <DescLine key={i}>{text}</DescLine>;
      if (kind === 'dash') return <DescLine key={i}><Dash>-</Dash>{text}</DescLine>;
      return <DescNote key={i} $sub><Dash $sub>-</Dash>{text}</DescNote>;
    })}
  </DescCell>
);

const QuotePage = ({ page }) => (
  <PageCol>
    <PageHead>
      {page.active && <TopRuler />}
      <HeadLetters $withRuler={page.active} $n={33} $cw={14}>
        {Array.from({ length: 33 }, (_, i) => (
          <HeadLetter key={i} $on={page.active && i === 2}>{colName(page.start + i)}</HeadLetter>
        ))}
      </HeadLetters>
    </PageHead>
    <PageSheet>
      <Contact>contact@mondialimpact.com<br />0412054535</Contact>
      <Sheet>
        <LogoBox $c={1} $cs={7} $r={2} $rs={5}>
          <AppleMark />
          <LogoName>mondial impact</LogoName>
          <LogoTag>MONDIAL IMPACT RESEARCH TEAM</LogoTag>
        </LogoBox>
        <TitleBox $c={16} $cs={16} $r={2} $rs={4}>Devis n°12-2024-9-27</TitleBox>
        <ExportBtn $c={16} $cs={16} $r={6} $rs={2}>{page.button}</ExportBtn>

        <MergedText $c={1} $cs={15} $r={8} $bold>Mondial Impact Research Team - MIRT</MergedText>
        {LEFT_ADDR.map((t, i) => <MergedText key={t} $c={1} $cs={15} $r={9 + i}>{t}</MergedText>)}
        <MergedText $c={24} $cs={8} $r={9} $right $bold>Vanaka Seafood</MergedText>
        {RIGHT_ADDR.map((t, i) => <MergedText key={t} $c={24} $cs={8} $r={10 + i} $right>{t}</MergedText>)}

        <Bordered $c={1} $cs={9} $r={15} $rs={2} $shade $bold $justify="center">DATE DU DEVIS :</Bordered>
        <Bordered $c={10} $cs={22} $r={15} $rs={2} $justify="center">27/09/2024</Bordered>

        <Bordered $c={1} $cs={17} $r={18} $rs={2} $shade $bold $pad="0 0 0 11px">Description</Bordered>
        <Bordered $c={18} $cs={4} $r={18} $rs={2} $shade $bold $pad="0 0 0 11px">Quantité</Bordered>
        <Bordered $c={22} $cs={5} $r={18} $rs={2} $shade $bold $pad="0 0 0 11px">Prix unitaire</Bordered>
        <Bordered $c={27} $cs={5} $r={18} $rs={2} $shade $bold $pad="0 0 0 11px">Prix total HT</Bordered>

        {page.rows.map((row) => (
          <React.Fragment key={row.r}>
            <Description row={row} />
            <Bordered $c={18} $cs={4} $r={row.r} $rs={row.rs} $justify="center">1</Bordered>
            <Bordered $c={22} $cs={5} $r={row.r} $rs={row.rs} $justify="flex-end" $pad="0 3px 0 0">{row.price}</Bordered>
            <Bordered $c={27} $cs={5} $r={row.r} $rs={row.rs} $justify="flex-end" $pad="0 3px 0 0">{row.price}</Bordered>
          </React.Fragment>
        ))}

        <TermsBox $c={1} $cs={9} $r={48} $rs={5}>
          <Under>Durée de validité :</Under> 1 mois<br />
          <Under>Condition de règlement :</Under>
        </TermsBox>
        <Bordered $c={11} $cs={14} $r={48} $rs={2} $shade $justify="center">Total HT</Bordered>
        <Bordered $c={25} $cs={7} $r={48} $rs={2} $justify="flex-end" $pad="0 3px 0 0">{page.total}</Bordered>
        <Bordered $c={11} $cs={14} $r={50} $rs={2} $shade $justify="center">{page.tvaLabel}</Bordered>
        <Bordered $c={25} $cs={7} $r={50} $rs={2} $justify="flex-end" $pad="0 3px 0 0">{page.tva}</Bordered>

        {page.active && <SelectedCell $c={2} $cs={1} $r={7} />}
      </Sheet>
    </PageSheet>
  </PageCol>
);

const Launch = () => <Launcher><LauncherIco /></Launcher>;

const App = () => (
  <>
    <Global />
    <Window>
      <TitleBar>
        <ExcelLogo />
        <DocTitle>Logiciel Facturation&nbsp;&nbsp;•&nbsp;&nbsp;Saved to this PC <Chev c="#fff" w={12} /></DocTitle>
        <SearchBox><SearchIco />Search</SearchBox>
        <Avatar>J</Avatar>
        <WinBtns>
          <MinIco />
          <RestoreIco />
          <CrossIco s={14} />
        </WinBtns>
      </TitleBar>

      <TabRow>
        <Tab $mr={32}>File</Tab>
        <Tab $active>Home</Tab>
        {['Insert', 'Draw', 'Page Layout', 'Formulas'].map((t) => <Tab key={t}>{t}</Tab>)}
        {['Data', 'Review', 'View', 'Automate', 'Developer', 'Help', 'Acrobat'].map((t) => <Tab key={t} $mr={24.3}>{t}</Tab>)}
        <TabRight>
          <CommentsBtn><CommentIco />Comments</CommentsBtn>
          <ShareBtn><ShareIco />Share <Chev c="#222" w={8} /></ShareBtn>
        </TabRight>
      </TabRow>

      <RibbonCard>
        <RibbonBody>
          <Group $w={130}>
            <GroupBody $pl={10}>
              <BigBtn $w={62}>
                <BigIcon $pb={0}><PasteIco /></BigIcon>
                <BigText>Paste</BigText>
                <Row $h={16}><Chev /></Row>
              </BigBtn>
              <Stack $pt={0}>
                <Row $h={32}><Slot $w={24}><CutIco /></Slot></Row>
                <Row $h={32}><Slot $w={24}><CopyIco /></Slot><Slot $w={22}><Chev /></Slot></Row>
                <Row $h={30}><Slot $w={24}><PainterIco /></Slot></Row>
              </Stack>
            </GroupBody>
            <GroupLabel $launcher>Clipboard</GroupLabel>
            <Launch />
          </Group>

          <Group $w={292}>
            <GroupBody $pl={9}>
              <Stack $gap={9}>
                <Row>
                  <Combo $w={144}>Police corps<Chev /></Combo>
                  <Combo $w={62}>10<Chev /></Combo>
                  <Slot $w={32}><FontGrow up /></Slot>
                  <Slot $w={32}><FontGrow /></Slot>
                </Row>
                <Row>
                  <Slot $w={30}><Glyph $bold $size={17}>B</Glyph></Slot>
                  <Slot $w={32}><Glyph $italic $size={17}>I</Glyph></Slot>
                  <Slot $w={32}><Glyph $under $size={17}>U</Glyph></Slot>
                  <Slot $w={16}><Chev /></Slot>
                  <VSep $h={28} $ml={5} />
                  <Slot $w={32}><BordersIco /></Slot>
                  <Slot $w={16}><Chev /></Slot>
                  <VSep $h={28} $ml={4} />
                  <Slot $w={38}><FillIco h={27} /></Slot>
                  <Slot $w={8}><Chev /></Slot>
                  <Slot $w={38} $ml={4}><ColorA /></Slot>
                  <Slot $w={12} $ml={-1}><Chev /></Slot>
                </Row>
              </Stack>
            </GroupBody>
            <GroupLabel $launcher>Font</GroupLabel>
            <Launch />
          </Group>

          <Group $w={242}>
            <GroupBody $pl={8}>
              <Stack $gap={9} $w={166}>
                <Row>
                  <Slot $w={32}><Svg w={18} h={12}><Lines ys={[1, 6, 11]} /></Svg></Slot>
                  <Slot $w={32}><Svg w={18} h={14}><Lines ys={[3, 8, 13]} /></Svg></Slot>
                  <SelectedSlot $w={30} $ml={1}><Svg w={18} h={13}><Lines ys={[1, 6, 12]} /></Svg></SelectedSlot>
                  <Slot $w={32} $ml={1}><OrientIco /></Slot>
                  <Slot $w={10}><Chev /></Slot>
                </Row>
                <Row>
                  <Slot $w={32}><Svg w={18} h={18}><Lines ys={[1, 6, 11, 17]} x2={[18, 12, 18, 12]} /></Svg></Slot>
                  <Slot $w={32}><Svg w={18} h={18}><Lines ys={[1, 6, 11, 17]} x1={[0, 3, 0, 3]} x2={[18, 15, 18, 15]} /></Svg></Slot>
                  <Slot $w={32}><Svg w={18} h={18}><Lines ys={[1, 6, 11, 17]} x1={[0, 6, 0, 6]} x2={18} /></Svg></Slot>
                  <Slot $w={32}><IndentIco dir={-1} /></Slot>
                  <Slot $w={32}><IndentIco dir={1} /></Slot>
                </Row>
              </Stack>
              <VSep $tall $h={78} $mt={7} />
              <Stack $gap={9}>
                <Row><Slot $w={46}><WrapIco /></Slot></Row>
                <Row><Slot $w={42}><MergeIco /></Slot><Slot $w={8}><Chev /></Slot></Row>
              </Stack>
            </GroupBody>
            <GroupLabel $launcher>Alignment</GroupLabel>
            <Launch />
          </Group>

          <Group $w={200}>
            <GroupBody $pl={10}>
              <Stack $gap={9}>
                <Row><Combo $w={179}>General<Chev /></Combo></Row>
                <Row>
                  <Slot $w={32}><AccountingIco /></Slot>
                  <Slot $w={12}><Chev /></Slot>
                  <Slot $w={44}><Glyph $size={25}>%</Glyph></Slot>
                  <Slot $w={20}><CommaIco /></Slot>
                  <VSep $h={28} $ml={8} />
                  <Slot $w={32}><DecimalIco /></Slot>
                  <Slot $w={30}><DecimalIco more /></Slot>
                </Row>
              </Stack>
            </GroupBody>
            <GroupLabel $launcher>Number</GroupLabel>
            <Launch />
          </Group>

          <Group $w={244}>
            <GroupBody>
              <BigBtn $w={110}>
                <BigIcon $pb={8}><CondFmtIco /></BigIcon>
                <BigText>Conditional</BigText>
                <BigText>Formatting <Chev /></BigText>
              </BigBtn>
              <BigBtn $w={56}>
                <BigIcon><TableFmtIco /></BigIcon>
                <BigText>Format as</BigText>
                <BigText>Table <Chev /></BigText>
              </BigBtn>
              <BigBtn $w={77}>
                <BigIcon><CellStyleIco /></BigIcon>
                <BigText>Cell</BigText>
                <BigText>Styles <Chev /></BigText>
              </BigBtn>
            </GroupBody>
            <GroupLabel>Styles</GroupLabel>
          </Group>

          <Group $w={124}>
            <GroupBody $pl={14}>
              <Stack $pt={0}>
                <Row $h={33} $mt={-3}><CellOpIco kind="insert" /><SmallLabel $w={49}>Insert</SmallLabel><Chev /></Row>
                <Row $h={33}><CellOpIco kind="delete" /><SmallLabel $w={57}>Delete</SmallLabel><Chev /></Row>
                <Row $h={32}><CellOpIco kind="format" /><SmallLabel $w={49}>Format</SmallLabel><Chev /></Row>
              </Stack>
            </GroupBody>
            <GroupLabel>Cells</GroupLabel>
          </Group>

          <Group $w={186}>
            <GroupBody $pl={13}>
              <Stack $pt={0} $w={46}>
                <Row $h={33} $mt={-3}><Slot $w={24}><SigmaIco /></Slot><Slot $w={22}><Chev /></Slot></Row>
                <Row $h={33}><Slot $w={24}><FillDownIco /></Slot><Slot $w={22}><Chev /></Slot></Row>
                <Row $h={32}><Slot $w={24}><EraserIco /></Slot><Slot $w={22}><Chev /></Slot></Row>
              </Stack>
              <BigBtn $w={57}>
                <BigIcon><SortIco /></BigIcon>
                <BigText>Sort &amp;</BigText>
                <BigText>Filter <Chev /></BigText>
              </BigBtn>
              <BigBtn $w={56}>
                <BigIcon><FindIco /></BigIcon>
                <BigText>Find &amp;</BigText>
                <BigText>Select <Chev /></BigText>
              </BigBtn>
            </GroupBody>
            <GroupLabel>Editing</GroupLabel>
          </Group>

          <Group $w={77}>
            <GroupBody>
              <BigBtn $w={76}>
                <BigIcon $pb={4}><AddInsIco /></BigIcon>
                <BigText>Add-ins</BigText>
              </BigBtn>
            </GroupBody>
            <GroupLabel>Add-ins</GroupLabel>
          </Group>

          <Group $w={76}>
            <GroupBody>
              <BigBtn $w={75}>
                <BigIcon $pb={4}><AnalyseIco /></BigIcon>
                <BigText>Analyse</BigText>
                <BigText>Data</BigText>
              </BigBtn>
            </GroupBody>
          </Group>

          <Group $w={272}>
            <GroupBody>
              <BigBtn $w={126}>
                <BigIcon $pb={5}><PdfLinkIco /></BigIcon>
                <BigText>Créer un PDF et</BigText>
                <BigText>partager le lien</BigText>
              </BigBtn>
              <BigBtn $w={126}>
                <BigIcon $pb={5}><PdfMailIco /></BigIcon>
                <BigText>Créer un PDF et le</BigText>
                <BigText>partager via Outlook</BigText>
              </BigBtn>
            </GroupBody>
            <GroupLabel>Adobe Acrobat</GroupLabel>
          </Group>

          <CollapseSlot><Chev w={13} c="#444" /></CollapseSlot>
        </RibbonBody>

        <Qat>
          <QatText $w={54} $ml={0}>AutoSave</QatText>
          <Toggle><ToggleKnob /></Toggle>
          <Slot $w={20} $ml={14}><SaveIco /></Slot>
          <QatText $w={27}>Save</QatText>
          <Slot $w={20} $ml={21}><UndoIco /></Slot>
          <QatText $w={32}>Undo</QatText>
          <Slot $w={10} $ml={12}><Chev w={8} /></Slot>
          <Slot $w={20} $ml={13}><RedoIco /></Slot>
          <QatText $w={32} $ml={4} $off>Redo</QatText>
          <Slot $w={10} $ml={12}><Chev w={8} c="#8a8a8a" /></Slot>
          <Slot $w={20} $ml={12}><FillIco h={26} /></Slot>
          <QatText $w={58} $ml={4}>Fill Colour</QatText>
          <Slot $w={10} $ml={3}><Chev w={8} /></Slot>
          <Slot $w={19} $ml={16}><ThickIco /></Slot>
          <QatText $w={128} $ml={6}>Thick Outside Borders</QatText>
          <Slot $w={19} $ml={21}><MergeIco s={19} h={24} /></Slot>
          <QatText $w={95} $ml={6}>Merge &amp; Centre</QatText>
          <Slot $w={18} $ml={23}><DedupIco /></Slot>
          <QatText $w={111} $ml={5}>Remove Duplicates</QatText>
          <Slot $w={10} $ml={25}><MoreIco /></Slot>
        </Qat>
      </RibbonCard>

      <SecurityBar>
        <ShieldIco />
        <RiskTitle>SECURITY RISK</RiskTitle>
        <RiskLink>Microsoft has blocked macros from running because the source of this file is untrusted.</RiskLink>
        <LearnMore>Learn More</LearnMore>
        <BannerClose><CrossIco s={12} sw={1.6} /></BannerClose>
      </SecurityBar>

      <FormulaBar>
        <FieldBox $w={465}>BQ7<Chev c="#ddd" w={13} /></FieldBox>
        <DotSlot><VDots /></DotSlot>
        <FieldBox $w={106}>
          <CrossIco s={16} c="#8c8c8c" />
          <Svg w={19} h={15}><path d="M1 8 L7 14 L18 1" stroke="#8c8c8c" strokeWidth="1.3" /></Svg>
          <Fx />
          <Chev c="#ddd" w={10} />
        </FieldBox>
        <FieldBox $ml={5}><span /><Chev c="#ddd" w={13} /></FieldBox>
      </FormulaBar>

      <Workspace>
        <LeftRail>
          <CornerMark>
            <Svg w={4} h={4}><path d="M4 0 V4 H0 Z" fill="#ddd" /></Svg>
          </CornerMark>
          <RailBody>
            <LeftRuler />
            <RowHeads>
              {Array.from({ length: 50 }, (_, i) => (
                <RowHead key={i} $on={i === 6}>{i + 1}</RowHead>
              ))}
            </RowHeads>
          </RailBody>
        </LeftRail>

        <PagesRow>
          {PAGES.map((p) => <QuotePage key={p.start} page={p} />)}
          <PageCol $w={115}>
            <PageHead>
              <HeadLetters $n={2} $cw={46} $ml={45} $open>
                <HeadLetter>CV</HeadLetter>
                <HeadLetter>CW</HeadLetter>
              </HeadLetters>
            </PageHead>
            <NextPage><FaintGrid>Click</FaintGrid></NextPage>
          </PageCol>
        </PagesRow>

        <VScroll>
          <Tri dir="up" />
          <VThumb />
          <VDown><Tri dir="down" /></VDown>
        </VScroll>
      </Workspace>

      <BottomBar>
        <NavArrow $mr={21}><Svg w={8} h={14}><path d="M7 1 L1 7 L7 13" stroke="#999" strokeWidth="1.2" /></Svg></NavArrow>
        <NavArrow $mr={49}><Svg w={8} h={14}><path d="M1 1 L7 7 L1 13" stroke="#999" strokeWidth="1.2" /></Svg></NavArrow>
        <SheetTab $w={155}>Renseignement</SheetTab>
        <SheetTab $w={131}>Fichier client</SheetTab>
        <ActiveTab>Devis<ActiveLine /></ActiveTab>
        <SheetTab $w={102}>Acompte</SheetTab>
        <SheetTab $w={79}>Solde</SheetTab>
        <SheetTab $w={70}>DATA</SheetTab>
        <PlusSlot><Svg w={14} h={14}><path d="M7 0 V14 M0 7 H14" stroke="#e6e6e6" strokeWidth="1.4" /></Svg></PlusSlot>
        <HDots><VDots c="#ccc" /></HDots>
        <HScroll>
          <Tri dir="left" />
          <HThumb />
          <HRight><Tri dir="right" /></HRight>
        </HScroll>
      </BottomBar>
    </Window>
  </>
);

export default App;
